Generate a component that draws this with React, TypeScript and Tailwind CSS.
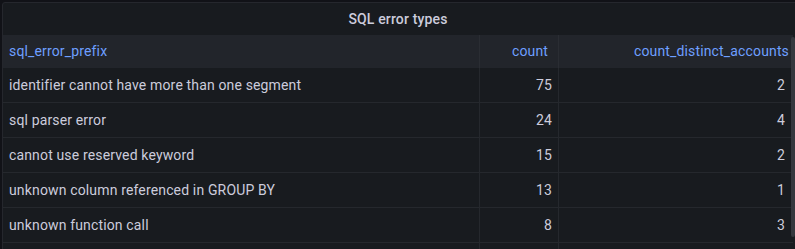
const rows: [string, number, number][] = [
  ['identifier cannot have more than one segment', 75, 2],
  ['sql parser error', 24, 4],
  ['cannot use reserved keyword', 15, 2],
  ['unknown column referenced in GROUP BY', 13, 1],
  ['unknown function call', 8, 3],
];

export default function App() {
  return (
    <div
      className="h-[249px] w-[795px] overflow-hidden bg-[#111217] pl-[2px] pt-[2px]"
      style={{ fontFamily: 'Roboto, "Liberation Sans", sans-serif' }}
    >
      <div className="relative h-[300px] w-[805px] rounded-[3px] border border-[#25272d] bg-[#181b1f] tracking-[0.15px]">
        <div className="flex h-[32px] w-[790px] items-center justify-center text-[14px] font-medium text-[#ccccdc]">
          SQL error types
        </div>
        <div className="grid w-[790px] grid-cols-[476px_79px_235px] text-[14px]">
          <div className="flex h-[33px] items-center bg-[#22252b] pl-[6px] text-[#6e9fff]">sql_error_prefix</div>
          <div className="flex h-[33px] items-center justify-end border-l border-[#2a2d33] bg-[#22252b] pr-[10px] text-[#6e9fff]">
            count
          </div>
          <div className="flex h-[33px] items-center justify-end border-l border-[#2a2d33] bg-[#22252b] pr-[4px] text-[#6e9fff]">
            count_distinct_accounts
          </div>
          {rows.map(([name, count, accounts]) => (
            <div key={name} className="contents text-[#ccccdc]">
              <div className="flex h-[35px] items-center border-b border-[#25282d] pl-[6px]">{name}</div>
              <div className="flex h-[35px] items-center justify-end border-b border-l border-[#25282d] pr-[6px]">
                {count}
              </div>
              <div className="flex h-[35px] items-center justify-end border-b border-l border-[#25282d] pr-[8px]">
                {accounts}
              </div>
            </div>
          ))}
          <div className="h-[35px]" />
          <div className="h-[35px] border-l border-[#25282d]" />
          <div className="h-[35px] border-l border-[#25282d]" />
        </div>
        <div className="absolute left-[788px] top-[34px] h-[200px] w-[4px] rounded-full bg-[#35383e]" />
      </div>
    </div>
  );
}
